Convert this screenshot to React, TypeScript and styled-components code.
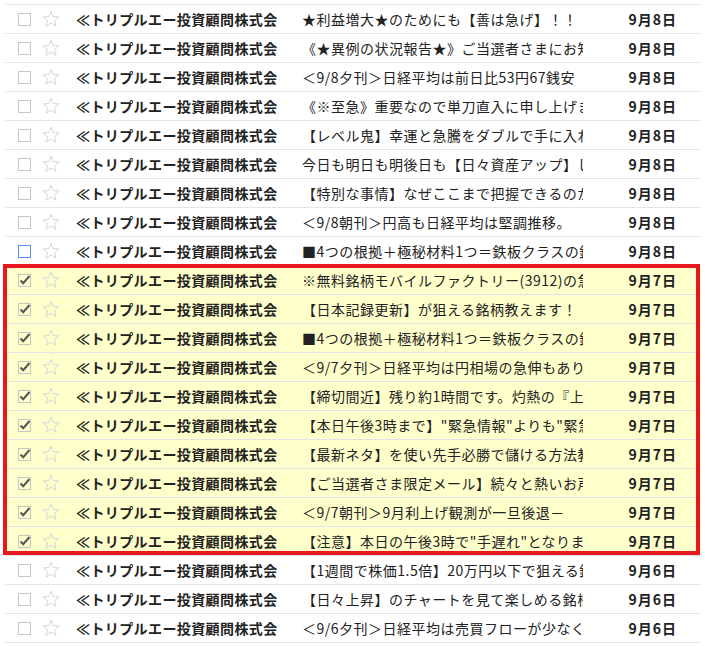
import styled, { createGlobalStyle } from "styled-components";

const GlobalStyle = createGlobalStyle`
  html, body {
    margin: 0;
    padding: 0;
    background: #ffffff;
  }
  body {
    font-family: "Noto Sans CJK JP", "Liberation Sans", sans-serif;
    color: #222222;
  }
`;

interface Mail {
  subject: string;
  date: string;
  checked?: boolean;
  focused?: boolean;
}

// sender name is cut by the column in the original list
const SENDER = "≪トリプルエー投資顧問株式会";

const before: Mail[] = [
  { subject: "★利益増大★のためにも【善は急げ】！！", date: "9月8日" },
  { subject: "《★異例の状況報告★》ご当選者さまにお知らせ", date: "9月8日" },
  { subject: "＜9/8夕刊＞日経平均は前日比53円67銭安", date: "9月8日" },
  { subject: "《※至急》重要なので単刀直入に申し上げます", date: "9月8日" },
  { subject: "【レベル鬼】幸運と急騰をダブルで手に入れる", date: "9月8日" },
  { subject: "今日も明日も明後日も【日々資産アップ】し続ける", date: "9月8日" },
  { subject: "【特別な事情】なぜここまで把握できるのか", date: "9月8日" },
  { subject: "＜9/8朝刊＞円高も日経平均は堅調推移。", date: "9月8日" },
  { subject: "■4つの根拠＋極秘材料1つ＝鉄板クラスの銘柄", date: "9月8日", focused: true },
];

const selected: Mail[] = [
  { subject: "※無料銘柄モバイルファクトリー(3912)の急騰", date: "9月7日" },
  { subject: "【日本記録更新】が狙える銘柄教えます！", date: "9月7日" },
  { subject: "■4つの根拠＋極秘材料1つ＝鉄板クラスの銘柄", date: "9月7日" },
  { subject: "＜9/7夕刊＞日経平均は円相場の急伸もあり", date: "9月7日" },
  { subject: "【締切間近】残り約1時間です。灼熱の『上昇』", date: "9月7日" },
  { subject: "【本日午後3時まで】\"緊急情報\"よりも\"緊急\"", date: "9月7日" },
  { subject: "【最新ネタ】を使い先手必勝で儲ける方法教えます", date: "9月7日" },
  { subject: "【ご当選者さま限定メール】続々と熱いお声", date: "9月7日" },
  { subject: "＜9/7朝刊＞9月利上げ観測が一旦後退－", date: "9月7日" },
  { subject: "【注意】本日の午後3時で\"手遅れ\"となります", date: "9月7日" },
].map((m) => ({ ...m, checked: true }));

const after: Mail[] = [
  { subject: "【1週間で株価1.5倍】20万円以下で狙える銘柄", date: "9月6日" },
  { subject: "【日々上昇】のチャートを見て楽しめる銘柄", date: "9月6日" },
  { subject: "＜9/6夕刊＞日経平均は売買フローが少なく", date: "9月6日" },
];

const List = styled.div`
  margin: 4px 4px 0 5px;
  border-top: 1px solid #e5e5e5;
`;

const Group = styled.div`
  position: relative;

  &::after {
    content: "";
    position: absolute;
    top: -2px;
    bottom: 1px;
    left: -2px;
    right: 1px;
    border: 4px solid #e8161f;
    pointer-events: none;
  }
`;

const Row = styled.div<{ $selected?: boolean }>`
  display: grid;
  grid-template-columns: 25px 34px 226px 281px 1fr;
  align-items: center;
  height: 28px;
  padding: 0 24px 0 12px;
  border-bottom: 1px solid ${({ $selected }) => ($selected ? "#e0e2e6" : "#e5e5e5")};
  background: ${({ $selected }) => ($selected ? "#ffffcc" : "#ffffff")};
  font-size: 14px;
  line-height: 28px;
`;

const Check = styled.span`
  display: flex;
  align-items: center;
  height: 28px;
`;

const Star = styled.span`
  display: flex;
  align-items: center;
  height: 28px;
`;

const Sender = styled.span`
  font-weight: 700;
  letter-spacing: 0.4px;
  white-space: nowrap;
  overflow: hidden;
  color: #222222;
`;

const Subject = styled.span`
  white-space: nowrap;
  overflow: hidden;
  letter-spacing: 0.5px;
  color: #222222;
`;

const DateCell = styled.span`
  text-align: right;
  font-weight: 700;
  letter-spacing: 1px;
  color: #222222;
`;

const CheckBox = ({ checked, focused }: { checked?: boolean; focused?: boolean }) => (
  <svg width="15" height="15" viewBox="0 0 15 15">
    <rect
      x="1.5"
      y="1.5"
      width="12"
      height="12"
      fill="none"
      stroke={focused ? "#4d90fe" : "#c6c6c6"}
      strokeWidth="1"
    />
    {checked && (
      <path d="M3.5 7.5 L6.2 10.2 L12.5 3" fill="none" stroke="#555555" strokeWidth="2" />
    )}
  </svg>
);

const StarIcon = () => (
  <svg width="18" height="18" viewBox="0 0 18 18">
    <polygon
      points="9,1.2 11.2,6.6 17,6.9 12.5,10.6 14,16.3 9,13.1 4,16.3 5.5,10.6 1,6.9 6.8,6.6"
      fill="none"
      stroke="#d6d6d6"
      strokeWidth="1"
      strokeLinejoin="round"
    />
  </svg>
);

const MailRow = ({ mail, selected }: { mail: Mail; selected?: boolean }) => (
  <Row $selected={selected}>
    <Check>
      <CheckBox checked={mail.checked} focused={mail.focused} />
    </Check>
    <Star>
      <StarIcon />
    </Star>
    <Sender>{SENDER}</Sender>
    <Subject>{mail.subject}</Subject>
    <DateCell>{mail.date}</DateCell>
  </Row>
);

export default function App() {
  return (
    <>
      <GlobalStyle />
      <List>
        {before.map((m, i) => (
          <MailRow key={"b" + i} mail={m} />
        ))}
        <Group>
          {selected.map((m, i) => (
            <MailRow key={"s" + i} mail={m} selected />
          ))}
        </Group>
        {after.map((m, i) => (
          <MailRow key={"a" + i} mail={m} />
        ))}
      </List>
    </>
  );
}
